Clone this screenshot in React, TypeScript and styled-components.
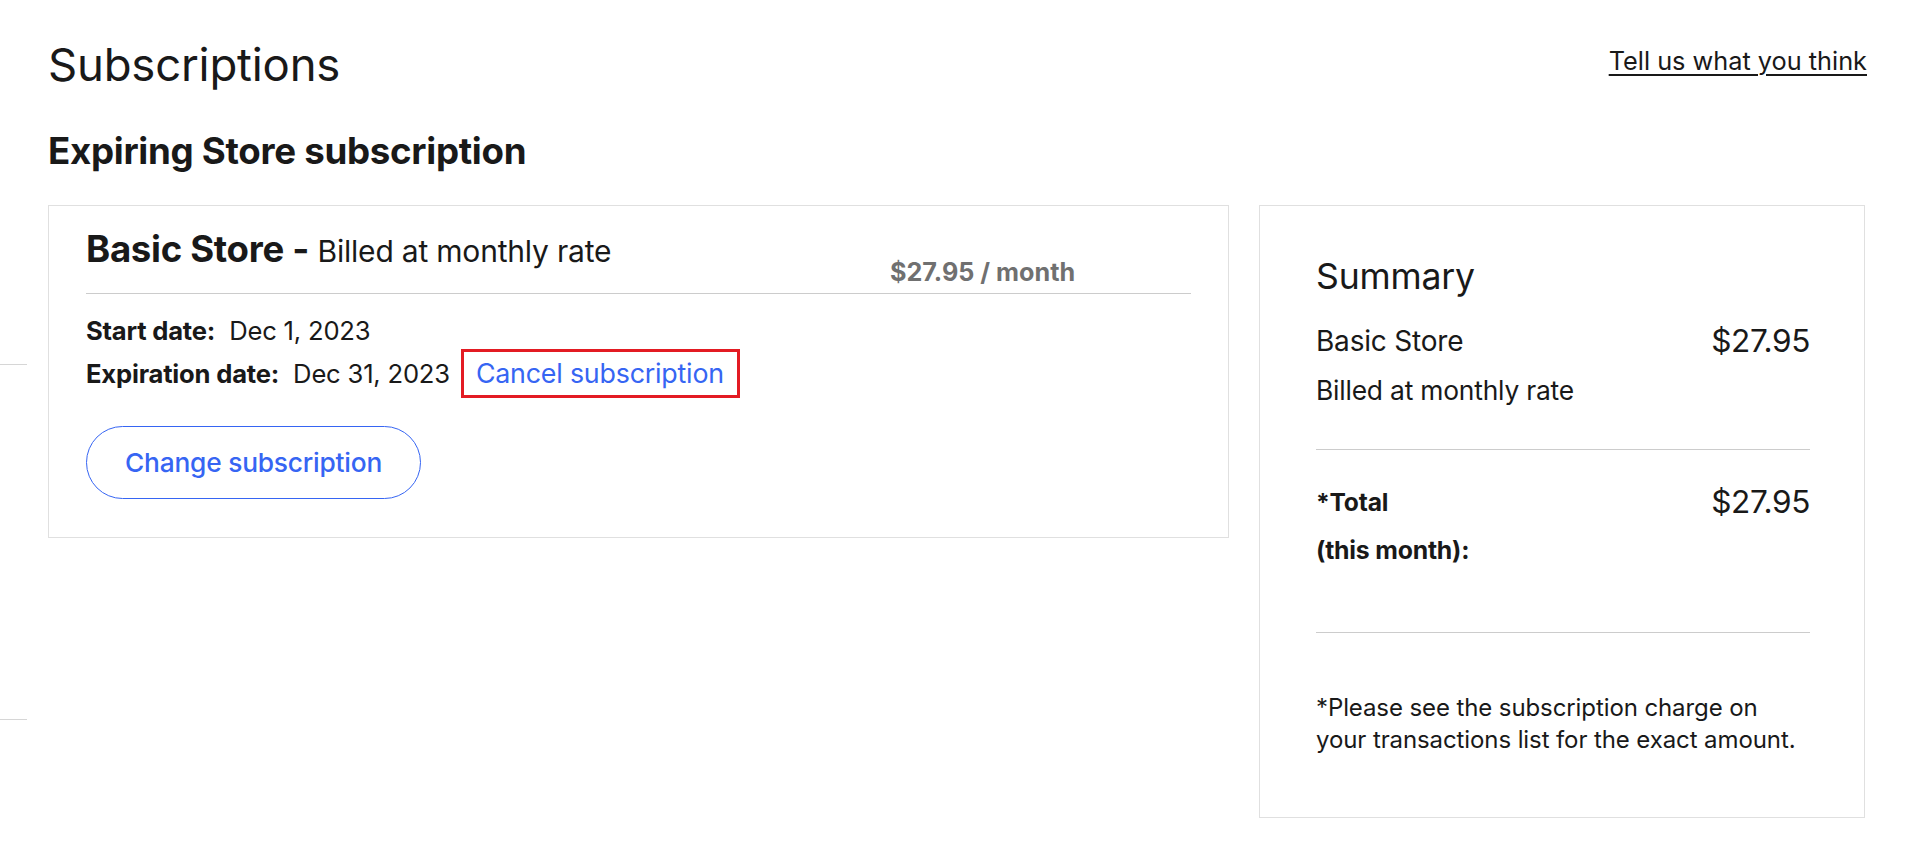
import React from "react";
import styled, { createGlobalStyle } from "styled-components";

const GlobalStyle = createGlobalStyle`
  html, body { margin: 0; padding: 0; background: #ffffff; }
  body {
    font-family: Inter, "Open Sans", "Liberation Sans", sans-serif;
    color: #191919;
    -webkit-font-smoothing: antialiased;
  }
  * { box-sizing: border-box; }
`;

const Page = styled.div`
  display: flex;
  width: 1921px;
  min-height: 866px;
`;

const Rail = styled.div`
  width: 27px;
  flex-shrink: 0;
  display: flex;
  flex-direction: column;
`;

const RailLine = styled.div<{ $top: number }>`
  height: 1px;
  background: #d6d6d6;
  margin-top: ${(p) => p.$top}px;
`;

const Main = styled.main`
  flex: 1;
  margin-left: 21px;
  margin-right: 54px;
  padding-top: 38px;
`;

const HeaderRow = styled.div`
  display: flex;
  justify-content: space-between;
  align-items: center;
`;

const PageTitle = styled.h1`
  margin: 0;
  font-size: 45.5px;
  font-weight: 400;
  line-height: 54px;
  letter-spacing: -0.2px;
`;

const FeedbackLink = styled.a`
  font-size: 25.3px;
  line-height: 30px;
  color: #191919;
  text-decoration: underline;
  text-underline-offset: 4px;
  text-decoration-thickness: 2px;
  margin-top: -8px;
`;

const SectionTitle = styled.h2`
  margin: 37px 0 0;
  font-size: 36.7px;
  font-weight: 700;
  line-height: 44px;
  letter-spacing: -0.3px;
`;

const Columns = styled.div`
  display: grid;
  grid-template-columns: 1181px 1fr;
  gap: 30px;
  margin-top: 32px;
  margin-right: 2px;
  align-items: start;
`;

const Card = styled.section`
  border: 1px solid #e0e0e0;
  padding: 21px 37px 38px;
`;

const PlanRow = styled.div`
  display: grid;
  grid-template-columns: 804px 1fr;
  align-items: start;
`;

const PlanName = styled.div`
  font-size: 36.6px;
  font-weight: 700;
  line-height: 44px;
  letter-spacing: -0.3px;
  white-space: nowrap;
`;

const PlanRate = styled.span`
  font-size: 30px;
  font-weight: 400;
  letter-spacing: -0.2px;
`;

const PlanPrice = styled.div`
  margin-top: 30px;
  font-size: 25.2px;
  font-weight: 700;
  color: #707070;
  line-height: 30px;
  white-space: nowrap;
`;

const Divider = styled.hr<{ $mt?: number }>`
  border: 0;
  height: 1px;
  background: #cccccc;
  margin: ${(p) => p.$mt ?? 0}px 0 0;
`;

const Dates = styled.div`
  display: flex;
  flex-direction: column;
  gap: 2px;
  margin-top: 21px;
`;

const DateRow = styled.div`
  display: flex;
  align-items: center;
  font-size: 25.6px;
  line-height: 32px;
  letter-spacing: -0.2px;
`;

const DateLabel = styled.span`
  font-weight: 700;
  margin-right: 14px;
`;

const CancelLink = styled.a`
  margin-left: 11px;
  padding: 6px 13px 6px 12px;
  border: 3px solid #e31b23;
  color: #3665f3;
  font-size: 26.8px;
  line-height: 31px;
  text-decoration: none;
  letter-spacing: -0.2px;
`;

const ChangeButton = styled.button`
  margin-top: 28px;
  height: 73px;
  padding: 0 38px;
  border: 1px solid #3665f3;
  border-radius: 37px;
  background: #ffffff;
  color: #3665f3;
  font-family: inherit;
  font-size: 26.3px;
  font-weight: 500;
  letter-spacing: -0.2px;
  cursor: pointer;
`;

const SummaryCard = styled.aside`
  border: 1px solid #e0e0e0;
  padding: 49px 54px 61px 56px;
`;

const SummaryTitle = styled.h3`
  margin: 0;
  font-size: 35.6px;
  font-weight: 400;
  line-height: 44px;
  letter-spacing: -0.2px;
`;

const LineItem = styled.div<{ $mt: number }>`
  display: flex;
  justify-content: space-between;
  align-items: center;
  height: 36px;
  margin-top: ${(p) => p.$mt}px;
`;

const ItemName = styled.span<{ $bold?: boolean }>`
  font-size: ${(p) => (p.$bold ? 24.6 : 28)}px;
  font-weight: ${(p) => (p.$bold ? 700 : 400)};
  line-height: 36px;
  letter-spacing: -0.2px;
`;

const ItemPrice = styled.span`
  font-size: 31.6px;
  line-height: 36px;
  letter-spacing: -0.4px;
`;

const SubNote = styled.div<{ $bold?: boolean; $mt: number }>`
  font-size: ${(p) => (p.$bold ? 24.8 : 26.4)}px;
  font-weight: ${(p) => (p.$bold ? 700 : 400)};
  line-height: 32px;
  margin-top: ${(p) => p.$mt}px;
  letter-spacing: -0.2px;
`;

const FootNote = styled.p`
  margin: 59px 0 0;
  font-size: 24px;
  line-height: 32px;
  letter-spacing: -0.1px;
`;

export default function App() {
  return (
    <>
      <GlobalStyle />
      <Page>
        <Rail>
          <RailLine $top={364} />
          <RailLine $top={354} />
        </Rail>
        <Main>
          <HeaderRow>
            <PageTitle>Subscriptions</PageTitle>
            <FeedbackLink href="#">Tell us what you think</FeedbackLink>
          </HeaderRow>
          <SectionTitle>Expiring Store subscription</SectionTitle>
          <Columns>
            <Card>
              <PlanRow>
                <PlanName>
                  Basic Store - <PlanRate>Billed at monthly rate</PlanRate>
                </PlanName>
                <PlanPrice>$27.95 / month</PlanPrice>
              </PlanRow>
              <Divider $mt={6} />
              <Dates>
                <DateRow>
                  <DateLabel>Start date:</DateLabel>
                  <span>Dec 1, 2023</span>
                </DateRow>
                <DateRow>
                  <DateLabel>Expiration date:</DateLabel>
                  <span>Dec 31, 2023</span>
                  <CancelLink href="#">Cancel subscription</CancelLink>
                </DateRow>
              </Dates>
              <ChangeButton type="button">Change subscription</ChangeButton>
            </Card>
            <SummaryCard>
              <SummaryTitle>Summary</SummaryTitle>
              <LineItem $mt={24}>
                <ItemName>Basic Store</ItemName>
                <ItemPrice>$27.95</ItemPrice>
              </LineItem>
              <SubNote $mt={15}>Billed at monthly rate</SubNote>
              <Divider $mt={43} />
              <LineItem $mt={34}>
                <ItemName $bold>*Total</ItemName>
                <ItemPrice>$27.95</ItemPrice>
              </LineItem>
              <SubNote $bold $mt={14}>(this month):</SubNote>
              <Divider $mt={66} />
              <FootNote>
                *Please see the subscription charge on
                <br />
                your transactions list for the exact amount.
              </FootNote>
            </SummaryCard>
          </Columns>
        </Main>
      </Page>
    </>
  );
}
